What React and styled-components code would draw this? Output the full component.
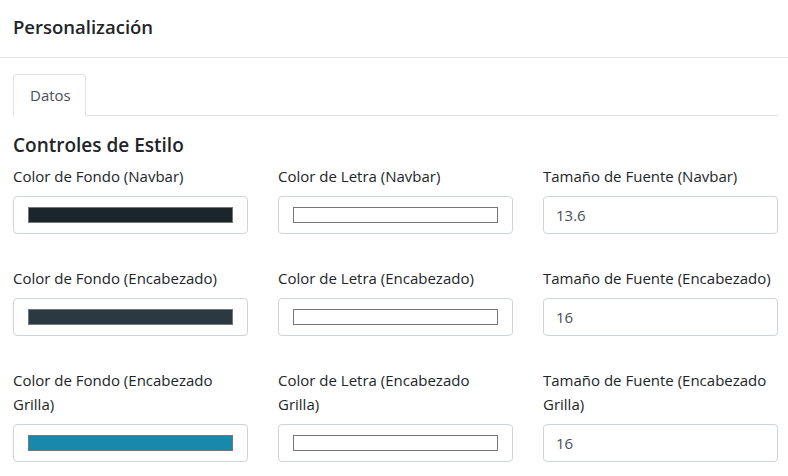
import React from "react";
import styled, { createGlobalStyle } from "styled-components";

const Global = createGlobalStyle`
  html, body { margin: 0; padding: 0; background: #fff; }
  body {
    font-family: "Segoe UI", "Open Sans", "Noto Sans", sans-serif;
    color: #212529;
    font-size: 15px;
    line-height: 1.6;
  }
  * { box-sizing: border-box; }
`;

const Card = styled.div`
  width: 788px;
  background: #fff;
`;

const CardHeader = styled.div`
  height: 58px;
  padding: 0 13px;
  display: flex;
  align-items: center;
  border-bottom: 1px solid #e3e3e3;
`;

const Title = styled.h5`
  margin: 0 0 3px;
  font-size: 18.5px;
  font-weight: 600;
  color: #212529;
`;

const CardBody = styled.div`
  padding: 16px 10px 0 13px;
`;

const TabList = styled.div`
  display: flex;
  border-bottom: 1px solid #dee2e6;
`;

const Tab = styled.button`
  font: inherit;
  font-size: 15px;
  color: #495057;
  background: #fff;
  border: 1px solid #dee2e6;
  border-bottom-color: #fff;
  border-radius: 4px 4px 0 0;
  margin-bottom: -1px;
  height: 42px;
  padding: 0 16px;
  width: 73px;
  cursor: pointer;
`;

const SectionTitle = styled.h4`
  margin: 17px 0 7px;
  font-size: 19px;
  font-weight: 600;
  line-height: 24px;
  color: #212529;
`;

const Grid = styled.div`
  display: grid;
  grid-template-columns: repeat(3, 235px);
  column-gap: 30px;
`;

const Field = styled.div`
  display: flex;
  flex-direction: column;
  margin-bottom: 32px;
`;

const Label = styled.label`
  font-size: 15px;
  line-height: 24px;
  margin-bottom: 8px;
  color: #212529;
  flex: 1;
`;

const Control = styled.div`
  height: 38px;
  border: 1px solid #ced4da;
  border-radius: 4px;
  background: #fff;
  padding: 6px 12px;
  display: flex;
  align-items: center;
`;

const Swatch = styled.div`
  margin: 0 2px;
  flex: 1;
  height: 16px;
  border: 1px solid #777;
  background: ${(p) => p.$color};
`;

const Value = styled.span`
  font-size: 15px;
  color: #495057;
  line-height: 24px;
`;

const rows = [
  [
    { label: "Color de Fondo (Navbar)", color: "#1b262b" },
    { label: "Color de Letra (Navbar)", color: "#ffffff" },
    { label: "Tamaño de Fuente (Navbar)", value: "13.6" },
  ],
  [
    { label: "Color de Fondo (Encabezado)", color: "#2b3942" },
    { label: "Color de Letra (Encabezado)", color: "#ffffff" },
    { label: "Tamaño de Fuente (Encabezado)", value: "16" },
  ],
  [
    { label: "Color de Fondo (Encabezado Grilla)", color: "#1888ab" },
    { label: "Color de Letra (Encabezado Grilla)", color: "#ffffff" },
    { label: "Tamaño de Fuente (Encabezado Grilla)", value: "16" },
  ],
];

export default function App() {
  return (
    <>
      <Global />
      <Card>
        <CardHeader>
          <Title>Personalización</Title>
        </CardHeader>
        <CardBody>
          <TabList>
            <Tab>Datos</Tab>
          </TabList>
          <SectionTitle>Controles de Estilo</SectionTitle>
          <Grid>
            {rows.flat().map((f) => (
              <Field key={f.label}>
                <Label>{f.label}</Label>
                <Control>
                  {f.color ? <Swatch $color={f.color} /> : <Value>{f.value}</Value>}
                </Control>
              </Field>
            ))}
          </Grid>
        </CardBody>
      </Card>
    </>
  );
}
